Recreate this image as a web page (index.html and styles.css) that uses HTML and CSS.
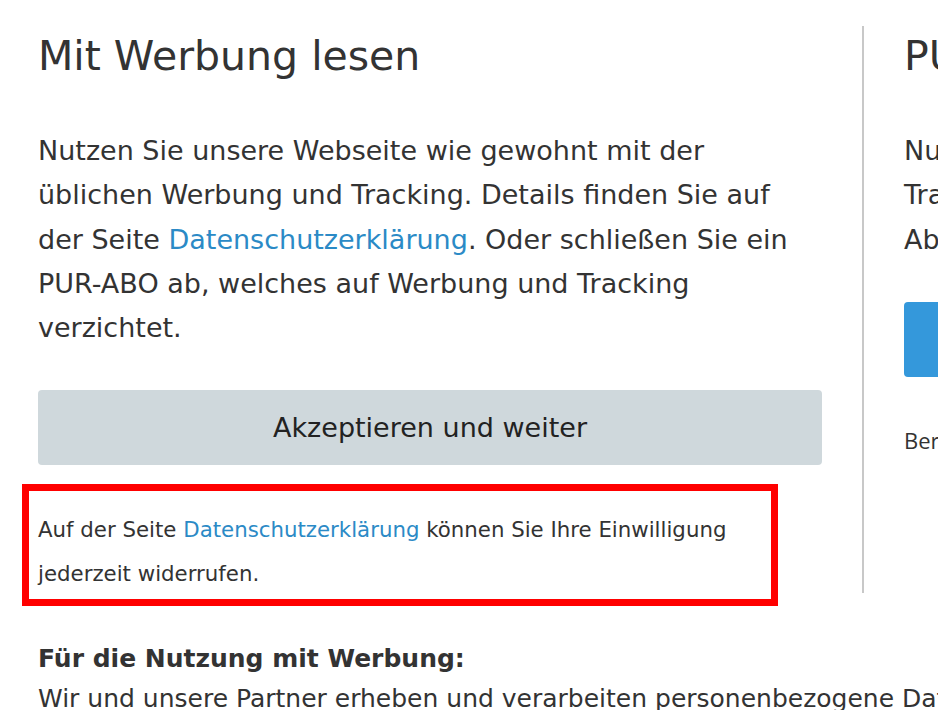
FILE: index.html
```html
<!DOCTYPE html>
<html lang="de">
<head>
  <meta charset="UTF-8">
  <title>Mit Werbung lesen</title>
  <link rel="stylesheet" href="styles.css">
</head>
<body>

  <div class="consent">
    <div class="columns">
      <div class="col col-ads">
        <h1>Mit Werbung lesen</h1>
        <p class="lead">Nutzen Sie unsere Webseite wie gewohnt mit der üblichen Werbung und Tracking. Details finden Sie auf der Seite <a href="#">Datenschutzerklärung</a>. Oder schließen Sie ein PUR-ABO ab, welches auf Werbung und Tracking verzichtet.</p>
        <button class="btn btn-accept">Akzeptieren und weiter</button>
        <div class="revoke">
          <p>Auf der Seite <a href="#">Datenschutzerklärung</a> können Sie Ihre Einwilligung jederzeit widerrufen.</p>
        </div>
      </div>

      <div class="col col-pur">
        <h1>PUR-ABO ohne Werbung</h1>
        <p class="lead">Nutzen Sie unsere Webseite ohne Werbung und ohne Tracking für nur 2,99 € im Monat mit monatlicher Abrechnung. Jederzeit kündbar.</p>
        <button class="btn btn-pur">Jetzt PUR-ABO abschließen</button>
        <p class="small">Bereits PUR-Abonnent? Hier anmelden</p>
      </div>
    </div>

    <div class="details">
      <h3>Für die Nutzung mit Werbung:</h3>
      <p>Wir und unsere Partner erheben und verarbeiten personenbezogene Daten.</p>
    </div>
  </div>

</body>
</html>
```

FILE: styles.css
```css
html, body {
  margin: 0;
  overflow: hidden;
  background: #fff;
}
body {
  font-family: "DejaVu Sans", sans-serif;
  color: #333;
}
a {
  color: #2b8ac6;
  text-decoration: none;
}
.consent {
  padding: 26px 0 0 38px;
  width: 1700px;
}
.columns {
  display: flex;
}
.col {
  width: 784px;
  flex: none;
}
.col-ads {
  padding-right: 40px;
}
.col-pur {
  border-left: 2px solid #c8c8c8;
  padding-left: 40px;
  height: 567px;
}
h1 {
  margin: 6px 0 0;
  font-size: 41px;
  font-weight: normal;
  line-height: 48px;
}
.lead {
  margin: 49px 0 0;
  font-size: 27px;
  line-height: 44.3px;
}
.btn {
  display: block;
  width: 100%;
  height: 75px;
  border: none;
  border-radius: 4px;
  font-family: inherit;
  font-size: 27px;
  cursor: pointer;
}
.btn-accept {
  margin-top: 40px;
  background: #cfd8dc;
  color: #222;
}
.btn-pur {
  margin-top: 40px;
  background: #3498db;
  color: #fff;
}
.revoke {
  margin: 19px 0 0 -16px;
  width: 733px;
  border: 7px solid #ff0000;
  padding: 17px 0 3px 9px;
}
.revoke p {
  margin: 0;
  font-size: 21.3px;
  line-height: 44px;
}
.small {
  margin: 48px 0 0;
  font-family: "Open Sans", sans-serif;
  font-size: 22px;
}
.details {
  padding-top: 35px;
}
.details h3 {
  margin: 0;
  font-size: 25px;
  line-height: 36px;
}
.details p {
  margin: 0;
  font-size: 25px;
  line-height: 44px;
  white-space: nowrap;
}
```
